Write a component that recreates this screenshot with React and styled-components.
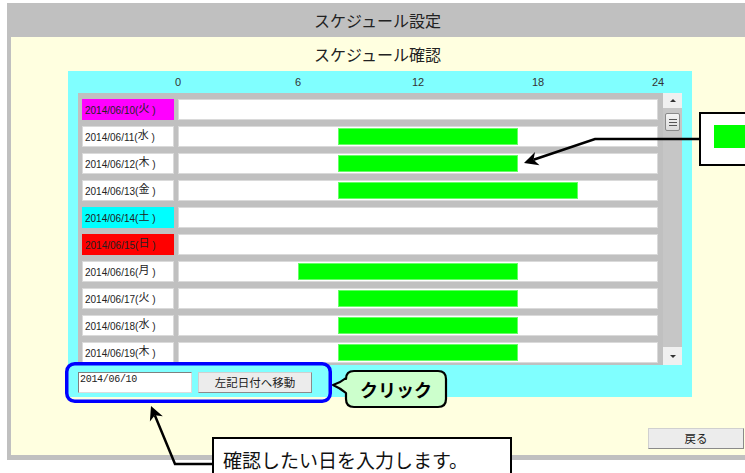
import React from 'react';
import styled, { createGlobalStyle } from 'styled-components';

const JP = `"Noto Sans CJK JP", "Liberation Sans", sans-serif`;

const GlobalStyle = createGlobalStyle`
  html, body {
    margin: 0;
    padding: 0;
    background: #fff;
    overflow: hidden;
  }
  body {
    font-family: "Liberation Sans", "Noto Sans CJK JP", sans-serif;
  }
`;

const HOUR = 20;

const rows = [
  { date: '2014/06/10', day: '火', color: '#ff00ff' },
  { date: '2014/06/11', day: '水', bar: [8, 17] },
  { date: '2014/06/12', day: '木', bar: [8, 17] },
  { date: '2014/06/13', day: '金', bar: [8, 20] },
  { date: '2014/06/14', day: '土', color: '#00ffff' },
  { date: '2014/06/15', day: '日', color: '#ff0000' },
  { date: '2014/06/16', day: '月', bar: [6, 17] },
  { date: '2014/06/17', day: '火', bar: [8, 17] },
  { date: '2014/06/18', day: '水', bar: [8, 17] },
  { date: '2014/06/19', day: '木', bar: [8, 17] },
];

const ticks = [0, 6, 12, 18, 24];

// arrow head with a small notch at its back, pointing from "from" to "tip"
function arrowHead(from, tip, len = 14, half = 7) {
  const dx = tip[0] - from[0];
  const dy = tip[1] - from[1];
  const d = Math.hypot(dx, dy);
  const ux = dx / d;
  const uy = dy / d;
  const bx = tip[0] - ux * len;
  const by = tip[1] - uy * len;
  const nx = -uy;
  const ny = ux;
  const notch = [tip[0] - ux * (len - 4), tip[1] - uy * (len - 4)];
  const pts = [
    tip,
    [bx + nx * half, by + ny * half],
    notch,
    [bx - nx * half, by - ny * half],
  ];
  return { points: pts.map(p => p.join(',')).join(' '), notch };
}

export default function App() {
  const headA = arrowHead([595, 139], [524, 163]);
  const headB = arrowHead([175, 464], [151, 406]);

  return (
    <Stage>
      <GlobalStyle />
      <Frame>
        <TitleBar>スケジュール設定</TitleBar>
        <Content>
          <SubTitle>スケジュール確認</SubTitle>
          <Panel>
            <Axis>
              {ticks.map(t => (
                <Tick key={t}>{t}</Tick>
              ))}
            </Axis>
            <Grid>
              <RowList>
                {rows.map(r => (
                  <Row key={r.date}>
                    <DateCell $bg={r.color}>
                      {r.date}(<Day>{r.day}</Day> )
                    </DateCell>
                    <BarCell>
                      {r.bar && (
                        <Bar
                          style={{
                            left: r.bar[0] * HOUR,
                            width: (r.bar[1] - r.bar[0]) * HOUR,
                          }}
                        />
                      )}
                    </BarCell>
                  </Row>
                ))}
              </RowList>
              <ScrollBar>
                <ScrollButton><Caret /></ScrollButton>
                <Thumb>
                  <Grip />
                  <Grip />
                  <Grip />
                </Thumb>
                <ScrollButton $down><Caret $down /></ScrollButton>
              </ScrollBar>
            </Grid>
            <Controls>
              <DateBox>2014/06/10</DateBox>
              <MoveButton>左記日付へ移動</MoveButton>
            </Controls>
          </Panel>
          <Footer>
            <BackButton>戻る</BackButton>
          </Footer>
        </Content>
      </Frame>

      <LegendNote>
        <Swatch />
      </LegendNote>
      <InputNote>確認したい日を入力します。</InputNote>

      <Marks viewBox="0 0 745 473">
        <rect x="66.75" y="363.75" width="263.5" height="37.5" rx="8"
          fill="none" stroke="#0000ff" strokeWidth="3.5" />
        <path
          d="M354 371 H438 Q446 371 446 379 V399 Q446 407 438 407 H354 Q346 407 346 399 V393 Q340 388 333 385 Q340 383 346 378 V379 Q346 371 354 371 Z"
          fill="#ccffcc" stroke="#000" strokeWidth="2.2" strokeLinejoin="round" />
        <polyline points={`699,139 595,139 ${headA.notch.join(',')}`}
          fill="none" stroke="#000" strokeWidth="2.5" />
        <polygon points={headA.points} fill="#000" />
        <polyline points={`212,464 175,464 ${headB.notch.join(',')}`}
          fill="none" stroke="#000" strokeWidth="2.5" />
        <polygon points={headB.points} fill="#000" />
      </Marks>
      <ClickLabel>クリック</ClickLabel>
    </Stage>
  );
}

const Stage = styled.div`
  position: relative;
  width: 745px;
  height: 473px;
  overflow: hidden;
`;

const Frame = styled.div`
  margin: 3px 0 0 7px;
  width: 745px;
  background: #c0c0c0;
  padding-bottom: 5px;
`;

const TitleBar = styled.div`
  height: 34px;
  line-height: 34px;
  text-align: center;
  font-family: ${JP};
  font-size: 16px;
  color: #222;
  padding-right: 4px;
`;

const Content = styled.div`
  margin-left: 4px;
  height: 418px;
  box-sizing: border-box;
  padding-top: 6px;
  background: #ffffe0;
  display: flex;
  flex-direction: column;
`;

const SubTitle = styled.div`
  height: 22px;
  line-height: 22px;
  text-align: center;
  font-family: ${JP};
  font-size: 16px;
  color: #222;
  margin-bottom: 6px;
  padding-right: 8px;
`;

const Panel = styled.div`
  margin-left: 57px;
  width: 624px;
  height: 326px;
  background: #80ffff;
`;

const Axis = styled.div`
  margin-left: 110px;
  width: 480px;
  height: 22px;
  display: flex;
  justify-content: space-between;
`;

const Tick = styled.span`
  width: 0;
  display: flex;
  justify-content: center;
  white-space: nowrap;
  line-height: 22px;
  font-size: 11px;
  color: #333;
`;

const Grid = styled.div`
  margin-left: 10px;
  width: 604px;
  height: 272px;
  background: #c0c0c0;
  display: flex;
  overflow: hidden;
`;

const RowList = styled.div`
  padding: 6px 0 0 4px;
  width: 576px;
  display: flex;
  flex-direction: column;
  gap: 6px;
`;

const Row = styled.div`
  display: flex;
  gap: 4px;
  height: 21px;
  flex-shrink: 0;
`;

const DateCell = styled.div`
  width: 92px;
  box-sizing: border-box;
  background: ${p => p.$bg || '#fff'};
  border: 1px solid ${p => (p.$bg ? 'transparent' : '#dadada')};
  padding-left: 2px;
  line-height: 19px;
  font-size: 10px;
  color: #222;
  white-space: nowrap;
`;

const Day = styled.span`
  font-family: ${JP};
  font-size: 11px;
  position: relative;
  top: -2px;
`;

const BarCell = styled.div`
  position: relative;
  width: 480px;
  box-sizing: border-box;
  background: #fff;
  border: 1px solid #dadada;
`;

const Bar = styled.div`
  position: absolute;
  top: 1px;
  height: 17px;
  margin-left: -1px;
  box-sizing: border-box;
  background: #00ff00;
  border: 1px solid #66ff66;
`;

const ScrollBar = styled.div`
  margin-left: 5px;
  width: 19px;
  background: #c6c6c6;
  display: flex;
  flex-direction: column;
  align-items: center;
`;

const ScrollButton = styled.div`
  width: 19px;
  height: ${p => (p.$down ? 18 : 15)}px;
  margin-top: ${p => (p.$down ? 'auto' : '0')};
  background: #f0f0f0;
  display: flex;
  align-items: center;
  justify-content: center;
`;

const Caret = styled.div`
  width: 0;
  height: 0;
  border-left: 3px solid transparent;
  border-right: 3px solid transparent;
  ${p => (p.$down ? 'border-top: 3px solid #333;' : 'border-bottom: 3px solid #333;')}
`;

const Thumb = styled.div`
  margin-top: 5px;
  width: 15px;
  height: 18px;
  box-sizing: border-box;
  background: linear-gradient(#f4f4f4, #dcdcdc);
  border: 1px solid #8a8a8a;
  border-radius: 2px;
  display: flex;
  flex-direction: column;
  align-items: center;
  justify-content: center;
  gap: 2px;
`;

const Grip = styled.div`
  width: 8px;
  height: 1px;
  background: #555;
`;

const Controls = styled.div`
  margin: 7px 0 0 10px;
  display: flex;
  gap: 6px;
`;

const DateBox = styled.div`
  width: 114px;
  height: 21px;
  box-sizing: border-box;
  background: #fff;
  border: 1px solid;
  border-color: #808080 #dcdcdc #dcdcdc #808080;
  padding: 1px 1px;
  font-family: "Liberation Mono", monospace;
  font-size: 10px;
  letter-spacing: -0.3px;
  line-height: 11px;
  color: #222;
`;

const PlainButton = styled.div`
  height: 21px;
  box-sizing: border-box;
  background: #ececec;
  border: 1px solid;
  border-color: #d0d0d0 #8a8a8a #8a8a8a #d0d0d0;
  font-family: ${JP};
  font-size: 11.5px;
  line-height: 19px;
  text-align: center;
  color: #222;
`;

const MoveButton = styled(PlainButton)`
  width: 114px;
`;

const Footer = styled.div`
  margin-top: 31px;
  padding-right: 8px;
  display: flex;
  justify-content: flex-end;
`;

const BackButton = styled(PlainButton)`
  width: 96px;
`;

const LegendNote = styled.div`
  position: absolute;
  left: 699px;
  top: 112px;
  width: 70px;
  height: 54px;
  box-sizing: border-box;
  background: #fff;
  border: 2px solid #000;
  padding: 11px 0 0 13px;
`;

const Swatch = styled.div`
  height: 23px;
  background: #00ff00;
`;

const InputNote = styled.div`
  position: absolute;
  left: 212px;
  top: 437px;
  width: 300px;
  height: 50px;
  box-sizing: border-box;
  background: #fff;
  border: 2px solid #000;
  padding: 8px 0 0 9px;
  font-family: ${JP};
  font-size: 19px;
  line-height: 26px;
  color: #111;
  white-space: nowrap;
`;

const Marks = styled.svg`
  position: absolute;
  left: 0;
  top: 0;
  width: 745px;
  height: 473px;
  pointer-events: none;
`;

const ClickLabel = styled.div`
  position: absolute;
  left: 346px;
  top: 371px;
  width: 100px;
  height: 36px;
  line-height: 36px;
  text-align: center;
  font-family: ${JP};
  font-size: 18px;
  font-weight: bold;
  color: #000;
  pointer-events: none;
`;
